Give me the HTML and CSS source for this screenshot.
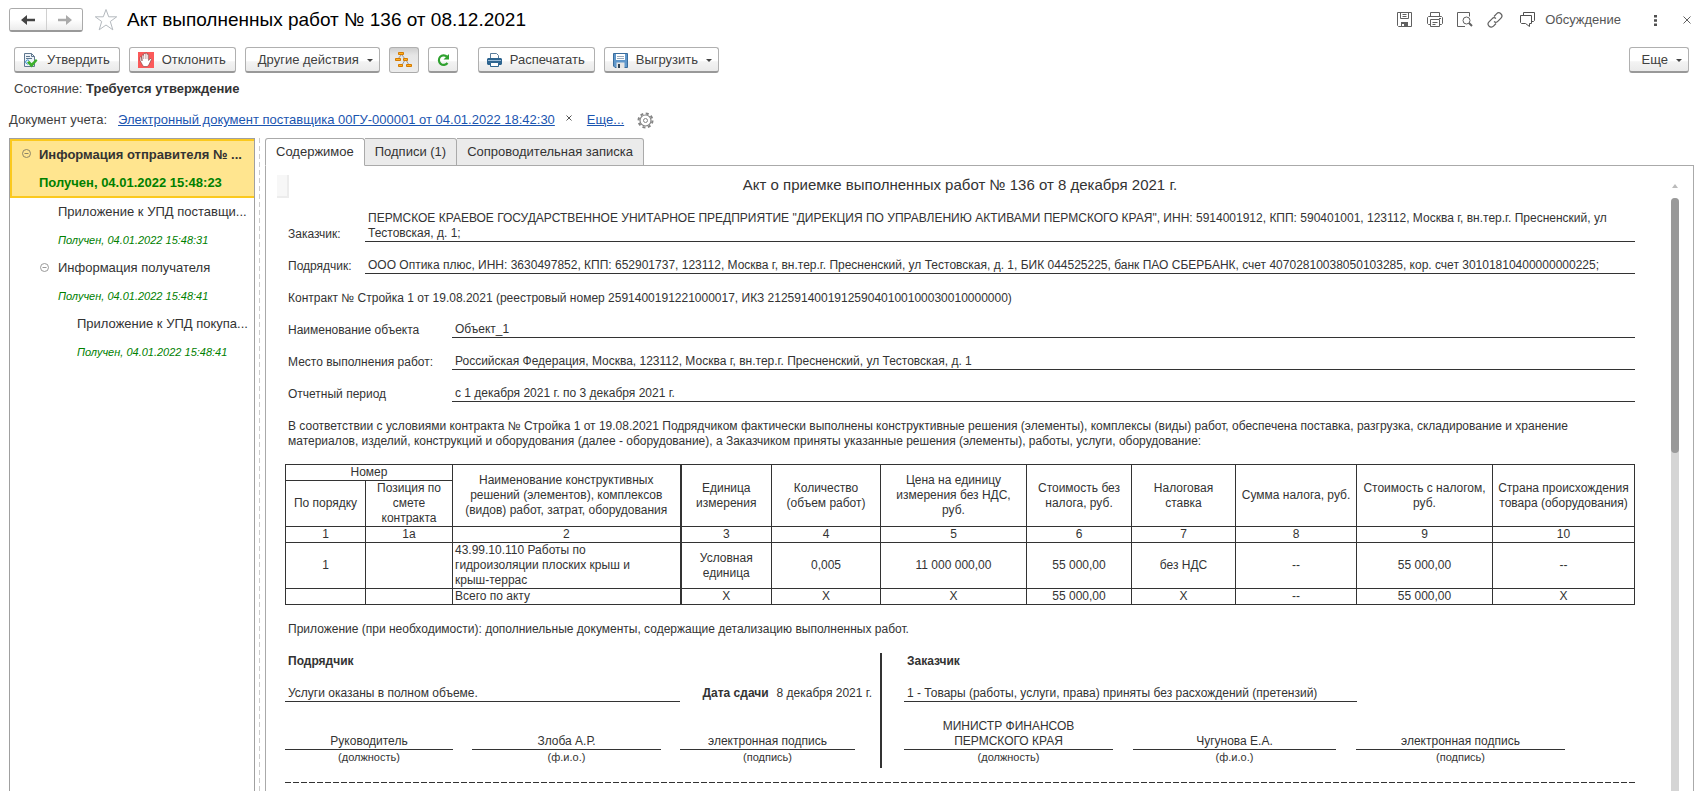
FILE: index.html
```html
<!DOCTYPE html>
<html lang="ru">
<head>
<meta charset="utf-8">
<title>Акт выполненных работ № 136 от 08.12.2021</title>
<link rel="stylesheet" href="styles.css">
</head>
<body>
<header class="titlebar">
  <div class="nav">
    <button class="nav-btn" aria-label="Назад"><svg width="14" height="10" viewBox="0 0 14 10"><path d="M6 0L0 5l6 5V6.200h8V3.800H6z" fill="#444"/></svg></button>
    <button class="nav-btn" aria-label="Вперед"><svg width="14" height="10" viewBox="0 0 14 10"><path d="M8 0l6 5-6 5V6.200H0V3.800h8z" fill="#aaa"/></svg></button>
  </div>
  <button class="plain star" aria-label="В избранное"><svg width="24" height="24" viewBox="0 0 24 24"><path d="M12 1.500l2.700 7.300h8L16.300 13.500l2.500 8.300L12 17l-6.800 4.800 2.500-8.300L1.300 8.800h8z" fill="none" stroke="#b4b9be"/></svg></button>
  <h1 class="title">Акт выполненных работ № 136 от 08.12.2021</h1>
  <div class="tools">
    <button class="plain" aria-label="Сохранить"><svg width="16" height="16" viewBox="0 0 16 16" fill="none" stroke="#606060"><path d="M.5.5h14v14h-13l-1-1zM3.500.5v6h8v-6M5.500 2.500h4M5.500 4.500h4"/><path d="M4 10h7v5H4z" fill="#606060" stroke="none"/><path d="M5 12h2v2H5z" fill="#fff" stroke="none"/></svg></button>
    <button class="plain" aria-label="Печать"><svg width="16" height="16" viewBox="0 0 16 16" fill="none" stroke="#606060"><path d="M3.500 4.500v-4h9v4M3.500 12.500h-2l-1-1v-6l1-1h13l1 1v6l-1 1h-2M3.500 7.500h9v7h-9zM5.500 10.500h5M5.500 12.500h3M12 6.500h2"/></svg></button>
    <button class="plain" aria-label="Просмотр"><svg width="16" height="16" viewBox="0 0 16 16" fill="none" stroke="#606060"><path d="M8 14.500H.5V.5h12v4"/><circle cx="9.500" cy="8.500" r="3.500"/><path d="M12 11l3 3" stroke-width="2"/></svg></button>
    <button class="plain" aria-label="Ссылка"><svg width="16" height="16" viewBox="0 0 16 16" fill="none" stroke="#606060" stroke-width="1.200"><path d="M7 4.500l2.500-2.600a3 3 0 0 1 4.500 4.200L11 9.200a3 3 0 0 1-4 .3M9 11.500l-2.500 2.600A3 3 0 0 1 2 9.900l3-3.100a3 3 0 0 1 4-.3"/></svg></button>
    <button class="plain discuss"><svg width="17" height="16" viewBox="0 0 17 16" fill="none" stroke="#505050"><path d="M1.500 3.500h11v8h-2v3l-4-3h-4l-1-1zM4.500 3V.5h11v8l-1 1H13"/></svg>Обсуждение</button>
    <button class="plain kebab" aria-label="Меню"><svg width="3" height="11" viewBox="0 0 3 11" fill="#505050"><path d="M0 0h3v2.500H0zM0 4.200h3v2.500H0zM0 8.500h3V11H0z"/></svg></button>
    <button class="plain" aria-label="Закрыть"><svg width="8" height="8" viewBox="0 0 8 8" stroke="#606060"><path d="M.5.5l7 7M7.500.5l-7 7"/></svg></button>
  </div>
</header>

<div class="toolbar">
  <button class="btn"><svg width="16" height="16" viewBox="0 0 16 16"><path d="M1.500 1.500h7l3 3v10h-10z" fill="#eef3f8" stroke="#60788f"/><path d="M8.500 1.500v3h3M3 4.500h4M3 6.500h6" fill="none" stroke="#60788f"/><path d="M6 8.500a2 2 0 1 0 0 3" fill="none" stroke="#2f8fd0"/><path d="M4 10.500l2.300-1.700L8.500 11.300 13 7l1.500 1.600L8.600 15.500z" fill="#3cb02c"/></svg>Утвердить</button>
  <button class="btn"><svg width="16" height="16" viewBox="0 0 16 16"><path d="M0 0h16v16H0z" fill="#fb5a5a"/><path d="M4 9V3.500q.8-1 1.500 0V2q.9-1 1.700 0v-.6q.9-.9 1.800 0V2.500q.8-.8 1.600 0V8.500l1.400-1.800q1.200-.7 1.600.5L11 12.500 9.500 14.500H5.500L4.200 12.500 2 8.500V5.200q.8-.9 1.500 0z" fill="#fff" stroke="#7c4040" stroke-width=".6"/><path d="M5.500 3.500V7M7.300 2v5M9 2.500V7" stroke="#a46a6a" stroke-width=".5"/></svg>Отклонить</button>
  <button class="btn btn-menu">Другие действия<span class="caret"></span></button>
  <button class="btn btn-icon pressed" aria-label="Структура"><svg width="17" height="16" viewBox="0 0 17 16"><path d="M6 3L3 7M7 3l3 4M10 8l-3 5M11 8l3 5" stroke="#999"/><g fill="#ffb020" stroke="#d57a00"><path d="M3.500.5h5v2h-5zM.5 6.500h5v2h-5zM8.500 6.500h4v2h-4zM3.500 12.500h4v2h-4zM11.500 12.500h5v2h-5z"/></g></svg></button>
  <button class="btn btn-icon" aria-label="Обновить"><svg width="14" height="14" viewBox="0 0 14 14"><path d="M11 3.600A4.800 4.800 0 1 0 11.500 10" fill="none" stroke="#2fa12f" stroke-width="2.200"/><path d="M13 1v5.500H7.500z" fill="#2fa12f"/></svg></button>
  <button class="btn gap-before"><svg width="15" height="14" viewBox="0 0 15 14"><path d="M3.500 6V.5h6l2 2V6" fill="#fff" stroke="#5b7d9b"/><path d="M1 5h13l1 1v5l-1 1H1l-1-1V6z" fill="#2e6590"/><path d="M1 7.500h13" stroke="#9dbdd8"/><path d="M3.500 9.500h8v4h-8z" fill="#fff" stroke="#2e6590"/></svg>Распечатать</button>
  <button class="btn"><svg width="15" height="15" viewBox="0 0 15 15"><path d="M.5.5h14v14H2l-1.500-1.500z" fill="#5f97cb" stroke="#3a6c9c"/><path d="M3 1h9v6H3z" fill="#fff"/><path d="M4 3.500h7M4 5.500h7" stroke="#9ab"/><path d="M3.500 9.500h8V15h-8z" fill="#e5e5e5"/><path d="M5 11h2v4H5z" fill="#345"/></svg>Выгрузить<span class="caret"></span></button>
  <button class="btn btn-menu more">Еще<span class="caret"></span></button>
</div>

<div class="state">Состояние: <b>Требуется утверждение</b></div>

<div class="docline">
  <span class="doc-label">Документ учета:</span>
  <a href="#" class="doc-link">Электронный документ поставщика 00ГУ-000001 от 04.01.2022 18:42:30</a>
  <button class="plain clear" aria-label="Очистить"><svg width="6" height="6" viewBox="0 0 6 6" stroke="#555"><path d="M.5.5l5 5M5.500.5l-5 5"/></svg></button>
  <a href="#">Еще...</a>
  <button class="plain gear" aria-label="Настройка"><svg width="17" height="17" viewBox="0 0 17 17" fill="none" stroke="#858585"><circle cx="8.500" cy="8.500" r="7" stroke-width="2" stroke-dasharray="3 2.500"/><circle cx="8.500" cy="8.500" r="5.500" stroke-width="1.200"/><circle cx="8.500" cy="8.500" r="2"/></svg></button>
</div>

<main class="workspace">
  <nav class="tree" aria-label="Документы">
    <div class="node selected">
      <button class="plain toggle" aria-label="Свернуть"><svg width="9" height="9" viewBox="0 0 9 9" fill="none" stroke="#8c8468"><circle cx="4.500" cy="4.500" r="4"/><path d="M2.500 4.500h4"/></svg></button>
      <div class="node-text"><div class="node-name">Информация отправителя № ...</div><div class="node-status">Получен, 04.01.2022 15:48:23</div></div>
    </div>
    <div class="node level-2">
      <div class="node-text"><div class="node-name">Приложение к УПД поставщи...</div><div class="node-status">Получен, 04.01.2022 15:48:31</div></div>
    </div>
    <div class="node level-2">
      <button class="plain toggle" aria-label="Свернуть"><svg width="9" height="9" viewBox="0 0 9 9" fill="none" stroke="#999"><circle cx="4.500" cy="4.500" r="4"/><path d="M2.500 4.500h4"/></svg></button>
      <div class="node-text"><div class="node-name">Информация получателя</div><div class="node-status">Получен, 04.01.2022 15:48:41</div></div>
    </div>
    <div class="node level-3">
      <div class="node-text"><div class="node-name">Приложение к УПД покупа...</div><div class="node-status">Получен, 04.01.2022 15:48:41</div></div>
    </div>
  </nav>
  <div class="splitter"></div>
  <section class="content">
    <div class="tabs" role="tablist">
      <button class="tab active" role="tab" aria-selected="true">Содержимое</button>
      <button class="tab" role="tab">Подписи (1)</button>
      <button class="tab" role="tab">Сопроводительная записка</button>
      <div class="tab-rest"></div>
    </div>
    <div class="page">
      <div class="cell-mark"></div>
      <article class="sheet">
        <h2 class="sheet-title">Акт о приемке выполненных работ № 136 от 8 декабря 2021 г.</h2>
        <div class="field"><span class="field-label">Заказчик:</span><span class="field-value">ПЕРМСКОЕ КРАЕВОЕ ГОСУДАРСТВЕННОЕ УНИТАРНОЕ ПРЕДПРИЯТИЕ "ДИРЕКЦИЯ ПО УПРАВЛЕНИЮ АКТИВАМИ ПЕРМСКОГО КРАЯ", ИНН: 5914001912, КПП: 590401001, 123112, Москва г, вн.тер.г. Пресненский, ул Тестовская, д. 1;</span></div>
        <div class="field"><span class="field-label">Подрядчик:</span><span class="field-value">ООО Оптика плюс, ИНН: 3630497852, КПП: 652901737, 123112, Москва г, вн.тер.г. Пресненский, ул Тестовская, д. 1, БИК 044525225, банк ПАО СБЕРБАНК, счет 40702810038050103285, кор. счет 30101810400000000225;</span></div>
        <p class="line">Контракт № Стройка 1 от 19.08.2021 (реестровый номер 2591400191221000017, ИКЗ 212591400191259040100100030010000000)</p>
        <div class="field wide"><span class="field-label">Наименование объекта</span><span class="field-value">Объект_1</span></div>
        <div class="field wide"><span class="field-label">Место выполнения работ:</span><span class="field-value">Российская Федерация, Москва, 123112, Москва г, вн.тер.г. Пресненский, ул Тестовская, д. 1</span></div>
        <div class="field wide"><span class="field-label">Отчетный период</span><span class="field-value">с 1 декабря 2021 г. по 3 декабря 2021 г.</span></div>
        <p class="line">В соответствии с условиями контракта № Стройка 1 от 19.08.2021 Подрядчиком фактически выполнены конструктивные решения (элементы), комплексы (виды) работ, обеспечена поставка, разгрузка, складирование и хранение материалов, изделий, конструкций и оборудования (далее - оборудование), а Заказчиком приняты указанные решения (элементы), работы, услуги, оборудование:</p>
        <table class="works">
          <colgroup><col class="c1"><col class="c1a"><col class="c2"><col class="c3"><col class="c4"><col class="c5"><col class="c6"><col class="c7"><col class="c8"><col class="c9"><col class="c10"></colgroup>
          <thead>
            <tr><th colspan="2">Номер</th><th rowspan="2" class="thick">Наименование конструктивных решений (элементов), комплексов (видов) работ, затрат, оборудования</th><th rowspan="2">Единица измерения</th><th rowspan="2">Количество (объем работ)</th><th rowspan="2">Цена на единицу измерения без НДС, руб.</th><th rowspan="2">Стоимость без налога, руб.</th><th rowspan="2">Налоговая ставка</th><th rowspan="2">Сумма налога, руб.</th><th rowspan="2">Стоимость с налогом, руб.</th><th rowspan="2">Страна происхождения товара (оборудования)</th></tr>
            <tr><th>По порядку</th><th>Позиция по смете контракта</th></tr>
            <tr><th>1</th><th>1а</th><th class="thick">2</th><th>3</th><th>4</th><th>5</th><th>6</th><th>7</th><th>8</th><th>9</th><th>10</th></tr>
          </thead>
          <tbody>
            <tr><td>1</td><td></td><td class="name thick">43.99.10.110 Работы по гидроизоляции плоских крыш и крыш-террас</td><td>Условная единица</td><td>0,005</td><td>11 000 000,00</td><td>55 000,00</td><td>без НДС</td><td>--</td><td>55 000,00</td><td>--</td></tr>
            <tr><td></td><td></td><td class="name thick">Всего по акту</td><td>X</td><td>X</td><td>X</td><td>55 000,00</td><td>X</td><td>--</td><td>55 000,00</td><td>X</td></tr>
          </tbody>
        </table>
        <p class="line">Приложение (при необходимости): дополниельные документы, содержащие детализацию выполненных работ.</p>
        <div class="parties">
          <section class="party contractor">
            <h3>Подрядчик</h3>
            <div class="result"><span class="result-text">Услуги оказаны в полном объеме.</span><span class="date"><b>Дата сдачи</b><span>8 декабря 2021 г.</span></span></div>
            <div class="signs">
              <div class="sign"><div class="sign-value">Руководитель</div><div class="sign-hint">(должность)</div></div>
              <div class="sign"><div class="sign-value">Злоба А.Р.</div><div class="sign-hint">(ф.и.о.)</div></div>
              <div class="sign"><div class="sign-value">электронная подпись</div><div class="sign-hint">(подпись)</div></div>
            </div>
          </section>
          <section class="party customer">
            <h3>Заказчик</h3>
            <div class="result"><span class="result-text">1 - Товары (работы, услуги, права) приняты без расхождений (претензий)</span></div>
            <div class="signs">
              <div class="sign"><div class="sign-value">МИНИСТР ФИНАНСОВ<br>ПЕРМСКОГО КРАЯ</div><div class="sign-hint">(должность)</div></div>
              <div class="sign"><div class="sign-value">Чугунова Е.А.</div><div class="sign-hint">(ф.и.о.)</div></div>
              <div class="sign"><div class="sign-value">электронная подпись</div><div class="sign-hint">(подпись)</div></div>
            </div>
          </section>
        </div>
        <div class="cut"></div>
      </article>
      <div class="scroll"><span class="scroll-up"></span><div class="scroll-track"><div class="scroll-thumb"></div></div></div>
    </div>
  </section>
</main>
</body>
</html>
```
FILE: styles.css
```css
* { box-sizing: border-box; }
body {
  margin: 0;
  height: 100vh;
  overflow: hidden;
  display: flex;
  flex-direction: column;
  background: #fff;
  color: #404040;
  font: 13px/16px "Liberation Sans", Arial, sans-serif;
}
h1, h2, h3, p { margin: 0; font-size: inherit; font-weight: normal; }
button { font: inherit; color: inherit; cursor: pointer; }
svg { display: block; flex: none; }
a { color: #1b55b0; }
.plain { padding: 0; border: 0; background: none; display: flex; align-items: center; }

.titlebar { display: flex; align-items: center; padding: 8px 17px 0 9px; }
.nav { display: flex; border: 1px solid #aaa; border-bottom: 2px solid #999; border-radius: 3px; overflow: hidden; }
.nav-btn { width: 36px; height: 21px; padding: 0; border: 0; display: flex; align-items: center; justify-content: center; background: linear-gradient(#fff 50%, #ececec); }
.nav-btn + .nav-btn { border-left: 1px solid #d0d0d0; }
.star { margin: 0 9px 0 11px; }
.title { color: #000; font-size: 19px; line-height: 24px; }
.tools { display: flex; align-items: center; gap: 14px; margin-left: auto; color: #555; }
.discuss { margin-left: 2px; gap: 9px; }
.kebab { margin: 0 12px 0 19px; }

.toolbar { display: flex; gap: 9px; padding: 15px 19px 0 14px; }
.btn {
  display: flex; align-items: center; justify-content: center; gap: 8px;
  height: 26px; padding: 1px 9px 0 8px;
  border: 1px solid #b0b0b0; border-bottom: 2px solid #999; border-radius: 3px;
  background: linear-gradient(#fff 55%, #f3f3f3 60%, #eaeaea);
  white-space: nowrap;
}
.btn:has(.caret) { padding-right: 6px; }
.btn.btn-menu { padding-left: 12px; }
.btn-icon { width: 30px; padding: 0; }
.pressed { background: linear-gradient(#cfcfcf, #e6e6e6 30%, #ececec); border-bottom: 1px solid #aaa; }
.caret { border: 3px solid transparent; border-top-color: #444; border-bottom: 0; }
.gap-before { margin-left: 11px; }
.more { margin-left: auto; }

.state { padding: 8px 14px 0; }
.state b { color: #333; }
.docline { display: flex; align-items: center; padding: 15px 9px 0; height: 31px; }
.doc-link { margin-left: 11px; }
.clear { margin: 0 15px 4px 11px; }
.gear { margin-left: 13px; }

.workspace { flex: 1; min-height: 0; display: flex; padding: 10px 14px 0 9px; color: #333; }
.tree { width: 246px; flex: none; border: 1px solid #a0a0a0; border-bottom: 0; }
.node { display: flex; height: 56px; padding-left: 48px; position: relative; }
.node-text { min-width: 0; flex: 1; line-height: 28px; }
.node-name { white-space: nowrap; }
.node-status { color: #008000; font-size: 11px; font-style: italic; }
.selected { height: 59px; padding-left: 27px; border: 2px solid #fbc91e; border-right: 0; background: #ffe58f; font-weight: bold; }
.selected .node-status { font-size: 13px; font-style: normal; }
.level-3 { padding-left: 67px; }
.toggle { position: absolute; left: 30px; top: 9px; }
.selected .toggle { left: 10px; top: 8px; }
.splitter { width: 10px; flex: none; background: repeating-linear-gradient(#ccc 0 5px, transparent 5px 8px) 4px 0 / 1px 100% no-repeat; }

.content { flex: 1; min-width: 0; display: flex; flex-direction: column; }
.tabs { display: flex; flex: none; }
.tab { height: 28px; padding: 0 10px; border: 1px solid #aaa; border-left-width: 0; border-radius: 0 3px 0 0; background: #ebebeb; }
.tab.active { border-left-width: 1px; border-bottom-color: transparent; border-radius: 3px 3px 0 0; background: #fff; }
.tab-rest { flex: 1; border-bottom: 1px solid #aaa; }
.page { flex: 1; min-height: 0; display: flex; border: solid #aaa; border-width: 0 1px; padding: 9px 14px 0 11px; }
.cell-mark { width: 12px; height: 23px; margin-right: -4px; flex: none; background: #f7f7f7; border: solid #ececec; border-width: 0 2px 2px 0; }

.sheet { flex: 1; min-width: 0; font-size: 12px; line-height: 15px; overflow: hidden; }
.sheet-title { font-size: 15px; line-height: 20px; text-align: center; }
.field { display: flex; align-items: flex-end; margin-top: 16px; }
.field-label { width: 80px; flex: none; padding-left: 3px; }
.field-value { flex: 1; padding-left: 3px; border-bottom: 1px solid #333; }
.wide .field-label { width: 167px; }
.line { margin-top: 17px; padding-left: 3px; }

.works { width: 100%; margin-top: 15px; table-layout: fixed; border-collapse: collapse; }
.works th, .works td { height: 16px; padding: 0 4px; border: 1px solid #333; font-weight: normal; text-align: center; vertical-align: middle; }
.works .name { padding: 0 30px 0 2px; text-align: left; }
.works .thick { border-right-width: 2px; }
.c1 { width: 80px; } .c1a { width: 87px; } .c2 { width: 228px; } .c3 { width: 91px; } .c4 { width: 109px; } .c5 { width: 146px; }
.c6 { width: 105px; } .c7 { width: 104px; } .c8 { width: 121px; } .c9 { width: 136px; } .c10 { width: 142px; }

.parties { display: grid; grid-template-columns: 597fr 753fr; margin-top: 16px; }
.party { height: 115px; display: flex; flex-direction: column; }
.party h3 { padding: 1px 3px 0; font-weight: bold; }
.contractor { border-right: 2px solid #333; }
.customer { padding-left: 22px; }
.result { display: flex; margin-top: 17px; }
.result-text { flex: 0 0 395px; padding-left: 3px; border-bottom: 1px solid #333; }
.customer .result-text { flex-basis: 453px; }
.date { display: flex; gap: 8px; margin-left: auto; padding-right: 8px; }
.signs { display: grid; grid-template-columns: 168fr 189fr 175fr; column-gap: 19px; align-items: end; margin-top: auto; padding: 0 25px 3px 0; text-align: center; }
.customer .signs { grid-template-columns: 209fr 203fr 209fr; column-gap: 20px; padding-right: 70px; }
.sign-value { border-bottom: 1px solid #333; }
.sign-hint { font-size: 11px; }
.cut { height: 1px; margin-top: 14px; background: repeating-linear-gradient(90deg, #333 0 6px, transparent 6px 8px); }

.scroll { width: 8px; margin-left: 36px; flex: none; display: flex; flex-direction: column; align-items: center; }
.scroll-up { margin: 9px 0 10px; border: 3px solid transparent; border-bottom: 4px solid #bbb; border-top: 0; }
.scroll-track { width: 8px; flex: 1; border-radius: 4px 4px 0 0; background: #d5d5d5; }
.scroll-thumb { height: 43%; border-radius: 4px; background: #999; }
```
